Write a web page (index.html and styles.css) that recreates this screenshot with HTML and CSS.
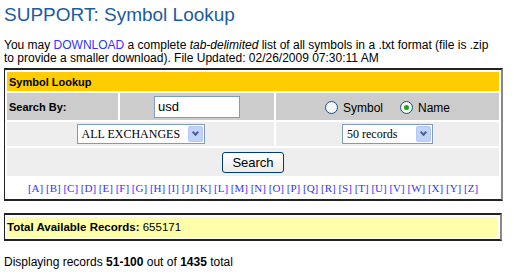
FILE: index.html
```html
<!DOCTYPE html>
<html lang="en">
  <head>
    <meta charset="UTF-8" />
    <title>Symbol Lookup</title>
    <link rel="stylesheet" href="styles.css">
  </head>
  <body>
    <h1 class="title">SUPPORT: Symbol Lookup</h1>
    <p class="intro">
      You may <a href="#" class="link">DOWNLOAD</a> a complete <i>tab-delimited</i> list of all symbols in a .txt format (file is .zip<br />
      to provide a smaller download). File Updated: 02/26/2009 07:30:11 AM
    </p>
    <table class="lookup">
      <tr>
        <td colspan="3" class="head">Symbol Lookup</td>
      </tr>
      <tr class="row-dark">
        <td class="label">Search By:</td>
        <td class="center"><input type="text" class="field" value="usd" /></td>
        <td class="center">
          <div class="radios">
            <label class="radio"><span class="dot"></span>Symbol</label>
            <label class="radio"><span class="dot on"></span>Name</label>
          </div>
        </td>
      </tr>
      <tr class="row-light">
        <td colspan="2" class="center">
          <div class="select sel-ex">ALL EXCHANGES<span class="arrow"></span></div>
        </td>
        <td class="center">
          <div class="select sel-rec">50 records<span class="arrow"></span></div>
        </td>
      </tr>
      <tr class="row-light">
        <td colspan="3" class="center"><button class="btn">Search</button></td>
      </tr>
      <tr>
        <td colspan="3" class="letters">
          <a href="#">[A]</a> <a href="#">[B]</a> <a href="#">[C]</a> <a href="#">[D]</a> <a href="#">[E]</a> <a href="#">[F]</a> <a href="#">[G]</a> <a href="#">[H]</a> <a href="#">[I]</a> <a href="#">[J]</a> <a href="#">[K]</a> <a href="#">[L]</a> <a href="#">[M]</a> <a href="#">[N]</a> <a href="#">[O]</a> <a href="#">[P]</a> <a href="#">[Q]</a> <a href="#">[R]</a> <a href="#">[S]</a> <a href="#">[T]</a> <a href="#">[U]</a> <a href="#">[V]</a> <a href="#">[W]</a> <a href="#">[X]</a> <a href="#">[Y]</a> <a href="#">[Z]</a>
        </td>
      </tr>
    </table>
    <div class="total"><b>Total Available Records:</b> 655171</div>
    <p class="showing">Displaying records <b>51-100</b> out of <b>1435</b> total</p>
  </body>
</html>
```

FILE: styles.css
```css
body {
  margin: 0 4px;
  font-family: "Liberation Sans", Arial, sans-serif;
  font-size: 12px;
  color: #000;
  width: 500px;
}
.title {
  font-size: 19px;
  font-weight: normal;
  color: #1b5c9e;
  margin: 4px 0 13px;
  line-height: 22px;
}
.intro {
  margin: 0 0 3px;
  line-height: 13px;
}
.link {
  color: #3333ff;
  text-decoration: none;
}
.lookup {
  width: 500px;
  margin-left: -1px;
  border: 2px solid #222;
  border-right-color: #888;
  border-spacing: 2px;
  font-size: 11px;
}
.lookup td {
  padding: 0;
}
.head {
  background: #ffcc00;
  font-weight: bold;
  height: 19px;
  padding-left: 2px !important;
}
.row-dark td {
  background: #cccccc;
  height: 27px;
}
.row-light td {
  background: #eeeeee;
}
.label {
  width: 109px;
  font-weight: bold;
  padding-left: 2px !important;
}
.center {
  text-align: center;
}
.row-dark .center:nth-child(2) {
  width: 154px;
}
.field {
  width: 78px;
  height: 20px;
  border: 1px solid #7f9db9;
  font-family: "Liberation Sans", Arial, sans-serif;
  font-size: 13px;
  padding: 0 3px;
  box-sizing: content-box;
  vertical-align: middle;
}
.radios {
  display: flex;
  justify-content: center;
  align-items: center;
  gap: 17px;
  padding-top: 2px;
}
.radio {
  display: flex;
  align-items: center;
  font-size: 12px;
}
.dot {
  width: 11px;
  height: 11px;
  border: 1px solid #1c5180;
  border-radius: 50%;
  background: #f4f4f0;
  margin-right: 5px;
  display: flex;
  align-items: center;
  justify-content: center;
}
.dot.on::after {
  content: "";
  width: 5px;
  height: 5px;
  border-radius: 50%;
  background: #21a121;
}
.select {
  display: inline-flex;
  align-items: center;
  justify-content: space-between;
  border: 1px solid #7f9db9;
  background: #fff;
  font-family: "Liberation Serif", "Times New Roman", serif;
  font-size: 12px;
  height: 18px;
  padding: 0 1px 0 4px;
  margin: 2px 0;
  vertical-align: middle;
}
.sel-ex {
  width: 121px;
}
.sel-rec {
  width: 84px;
}
.arrow {
  width: 15px;
  height: 16px;
  background: #c1d3fb;
  border: 1px solid #b4c8f6;
  border-radius: 2px;
  box-sizing: border-box;
  position: relative;
}
.arrow::after {
  content: "";
  position: absolute;
  left: 4px;
  top: 3px;
  width: 3px;
  height: 3px;
  border-right: 2px solid #4d6185;
  border-bottom: 2px solid #4d6185;
  transform: rotate(45deg);
}
.row-light:nth-child(4) td {
  height: 28px;
}
.btn {
  font-family: "Liberation Sans", Arial, sans-serif;
  font-size: 13px;
  padding: 1px 9px;
  height: 21px;
  background: linear-gradient(#ffffff, #ecebe6);
  border: 1px solid #003c74;
  border-radius: 3px;
}
.letters {
  text-align: center;
  height: 19px;
  font-family: "Liberation Serif", "Times New Roman", serif;
  font-size: 11px;
}
.letters a {
  color: #3333ff;
  text-decoration: none;
}
.total {
  margin: 12px 0 0 -1px;
  width: 491px;
  border: 2px solid #222;
  border-right-color: #888;
  padding: 2px;
  background-color: #ffffaa;
  background-clip: content-box;
  line-height: 20px;
  font-size: 11.5px;
}
.showing {
  margin: 14px 0 0;
}
```
